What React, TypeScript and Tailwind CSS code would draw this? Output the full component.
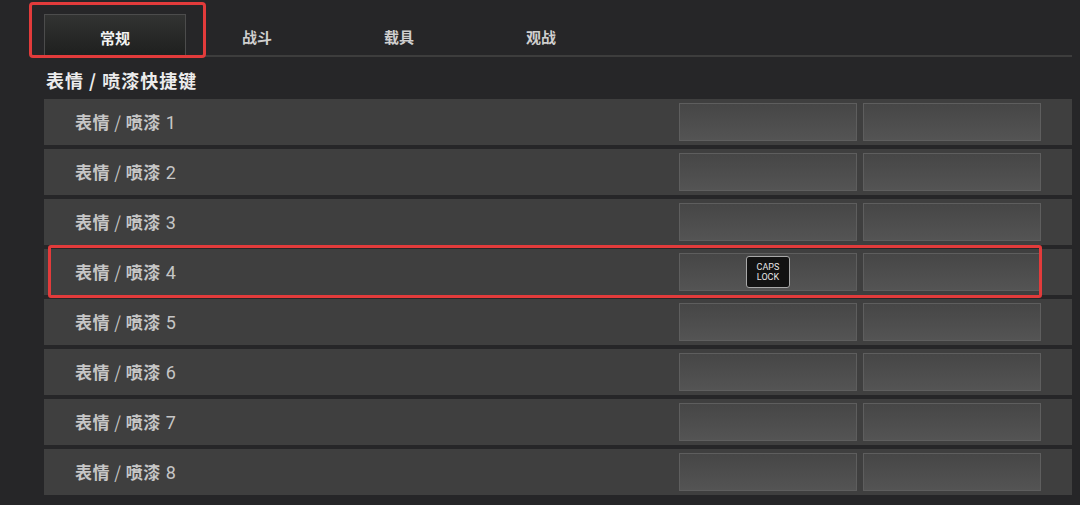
import React from "react";

const tabs = ["常规", "战斗", "载具", "观战"];

const rows = [1, 2, 3, 4, 5, 6, 7, 8];

const KeySlot = ({ children }: { children?: React.ReactNode }) => (
  <div className="w-[178px] h-[38px] border border-[#5e5e5e] bg-gradient-to-b from-[#464646] to-[#545454] flex items-center justify-center">
    {children}
  </div>
);

const CapsBadge = () => (
  <div className="w-[44px] h-[32px] rounded-[3px] border border-[#a8a8a8] bg-[#121212] flex flex-col items-center justify-center text-[9px] leading-[10px] text-[#e6e6e6] font-['Roboto',sans-serif]">
    <span>CAPS</span>
    <span>LOCK</span>
  </div>
);

const HotkeyRow = ({ n }: { n: number }) => {
  const highlighted = n === 4;
  return (
    <div className="relative h-[46px] bg-[#3f3f3f] flex items-center pl-[31px] pr-[31px]">
      <span className="flex-1 text-[17px] text-[#c6c6c6] tracking-[0.5px]">
        <span className="font-semibold">表情</span>
        <span className="font-normal"> / </span>
        <span className="font-semibold">喷漆</span>
        <span className="font-normal font-['Roboto',sans-serif] text-[18px]"> {n}</span>
      </span>
      <div className="flex gap-[6px]">
        <KeySlot>{highlighted && <CapsBadge />}</KeySlot>
        <KeySlot />
      </div>
      {highlighted && (
        <div className="absolute left-[4px] right-[30px] -top-[4px] -bottom-[3px] border-[3px] border-[#e23b3b] rounded-[3px] pointer-events-none" />
      )}
    </div>
  );
};

export default function App() {
  return (
    <div className="w-[1080px] h-[505px] overflow-hidden bg-[#262628] pl-[44px] pr-[8px] font-['Noto_Sans_CJK_SC','Noto_Sans',sans-serif]">
      <div className="flex items-end h-[57px] pt-[14px]">
        <div className="relative w-[142px] h-[43px] pt-[5px] border border-b-0 border-[#4c4c4c] bg-gradient-to-b from-[#323332] to-[#1e1f1e] flex items-center justify-center text-[15px] font-bold text-[#f2f2f2]">
          常规
          <div className="absolute -left-[16px] -right-[21px] -top-[13px] -bottom-[1px] border-[3px] border-[#e23b3b] rounded-[4px] pointer-events-none" />
        </div>
        <div className="flex-1 flex h-[43px] border-b-2 border-[#3d3d3d]">
          {tabs.slice(1).map((t) => (
            <div
              key={t}
              className="w-[142px] pt-[5px] flex items-center justify-center text-[15px] font-bold text-[#cfcfcf]"
            >
              {t}
            </div>
          ))}
        </div>
      </div>
      <div className="h-[42px] flex items-center pt-[4px] pl-[2px] text-[18px] font-bold text-[#ececec] tracking-[1px]">
        表情 / 喷漆快捷键
      </div>
      <div className="flex flex-col gap-[4px]">
        {rows.map((n) => (
          <HotkeyRow key={n} n={n} />
        ))}
      </div>
    </div>
  );
}
